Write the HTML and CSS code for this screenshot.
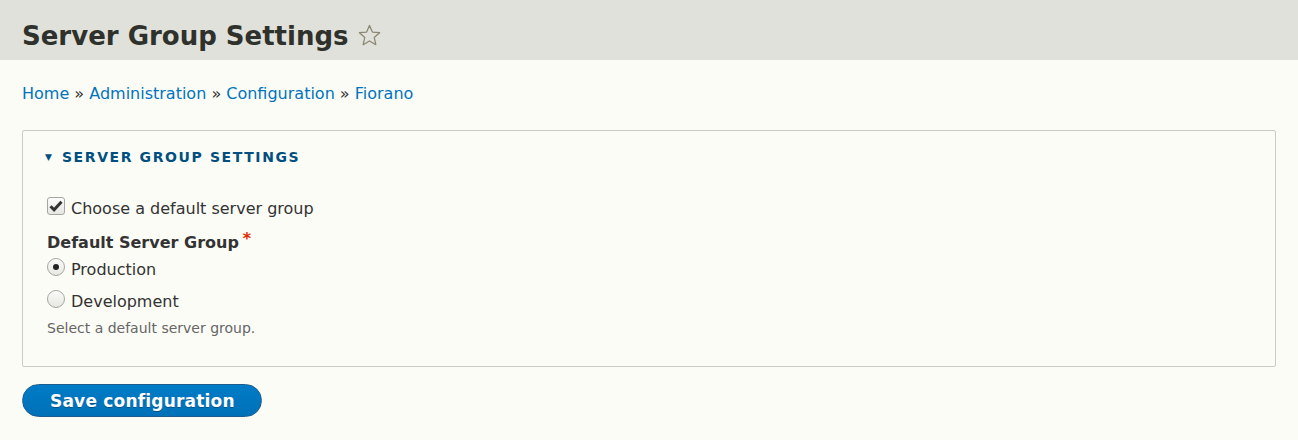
FILE: index.html
```html
<!DOCTYPE html>
<html lang="en">
<head>
  <meta charset="UTF-8">
  <title>Server Group Settings</title>
  <link rel="stylesheet" href="styles.css">
</head>
<body>

<header class="page-head">
  <h1 class="page-title">Server Group Settings
    <span class="shortcut">
      <svg width="25" height="25" viewBox="0 0 24 24"><path d="M12 2.3l2.8 6.4 6.9.6-5.2 4.6 1.6 6.9-6.1-3.6-6.1 3.6 1.6-6.9-5.2-4.6 6.9-.6z" fill="none" stroke="#8c8672" stroke-width="1.2" stroke-linejoin="round"/></svg>
    </span>
  </h1>
</header>

<main class="content">
  <nav class="breadcrumb">
    <a href="#">Home</a> » <a href="#">Administration</a> » <a href="#">Configuration</a> » <a href="#">Fiorano</a>
  </nav>

  <form class="config-form">
    <fieldset class="details">
      <div class="summary"><span class="arrow">▼</span>Server group settings</div>

      <div class="details-body">
        <label class="item check-row">
          <span class="box">
            <svg width="14" height="12" viewBox="0 0 14 12"><path d="M1.5 6.2l3.6 3.6L12.5 1.8" fill="none" stroke="#333" stroke-width="3"/></svg>
          </span>
          <span>Choose a default server group</span>
        </label>

        <div class="form-label">Default Server Group<span class="req">*</span></div>
        <label class="item radio-row">
          <span class="dot on"></span>
          <span>Production</span>
        </label>
        <label class="item radio-row second">
          <span class="dot"></span>
          <span>Development</span>
        </label>
        <div class="description">Select a default server group.</div>
      </div>
    </fieldset>

    <button type="button" class="btn-primary">Save configuration</button>
  </form>
</main>

</body>
</html>
```

FILE: styles.css
```css
body {
  margin: 0;
  font-family: 'DejaVu Sans', 'Liberation Sans', sans-serif;
  background: #fcfcf6;
  color: #333;
}
.page-head {
  background: #e0e1da;
  height: 60px;
  box-sizing: border-box;
  padding: 12px 22px 0;
  display: flex;
  align-items: center;
}
.page-title {
  margin: 0;
  font-size: 26px;
  font-weight: bold;
  color: #2f322c;
  display: flex;
  align-items: center;
}
.shortcut {
  display: inline-flex;
  margin-left: 8px;
  margin-top: -2px;
}
.content {
  padding: 0 22px;
}
.breadcrumb {
  margin-top: 24px;
  font-size: 16px;
  color: #333;
  line-height: 20px;
}
.breadcrumb a {
  color: #0074bd;
  text-decoration: none;
}
.config-form {
  margin-top: 26px;
}
.details {
  margin: 0;
  padding: 0;
  border: 1px solid #ccccc4;
  border-radius: 2px;
  background: #fcfcf6;
  height: 237px;
  box-sizing: border-box;
}
.summary {
  padding: 17px 22px 0;
  font-size: 14px;
  font-weight: bold;
  text-transform: uppercase;
  letter-spacing: 1.6px;
  color: #004f80;
  line-height: 18px;
}
.arrow {
  font-size: 9px;
  letter-spacing: 0;
  margin-right: 10px;
  vertical-align: 2px;
}
.details-body {
  padding: 31px 24px 0;
}
.item {
  display: flex;
  align-items: center;
  font-size: 16px;
  line-height: 24px;
  height: 24px;
  color: #333;
}
.box, .dot {
  flex: none;
  width: 16px;
  height: 16px;
  margin-right: 6px;
  border: 1px solid #a6a6a0;
  background: linear-gradient(#fbfbfa, #e6e6e2);
  box-shadow: inset 0 1px 1px #fff;
  position: relative;
  top: -3px;
  display: flex;
  align-items: center;
  justify-content: center;
}
.box {
  border-radius: 3px;
}
.dot {
  border-radius: 50%;
}
.dot.on::after {
  content: "";
  width: 6px;
  height: 6px;
  border-radius: 50%;
  background: #222;
}
.form-label {
  margin-top: 12px;
  font-size: 16px;
  font-weight: bold;
  line-height: 20px;
}
.req {
  color: #e32700;
  margin-left: 4px;
  position: relative;
  top: -4px;
}
.radio-row {
  margin-top: 5px;
}
.radio-row.second {
  margin-top: 8px;
}
.description {
  margin-top: 4px;
  font-size: 14px;
  line-height: 20px;
  color: #666;
}
.btn-primary {
  margin-top: 17px;
  height: 33px;
  padding: 0 26px 0 27px;
  border: 1px solid #1e5c90;
  border-radius: 20px;
  background: linear-gradient(#007bc6, #0071b8);
  color: #fff;
  font-family: inherit;
  font-size: 17px;
  font-weight: bold;
  letter-spacing: 0.2px;
  text-shadow: 0 1px 0 rgba(0,0,0,0.3);
}
```
